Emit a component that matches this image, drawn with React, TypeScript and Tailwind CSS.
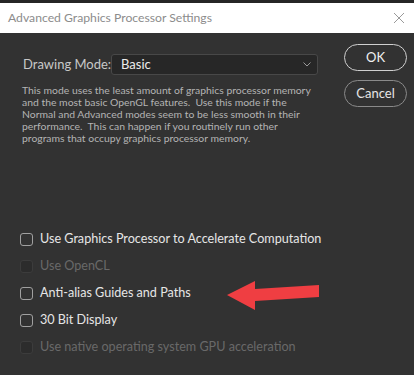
import React from "react";

const font = { fontFamily: 'Lato, "Open Sans", sans-serif' };

type Option = { label: string; disabled?: boolean };

const options: Option[] = [
  { label: "Use Graphics Processor to Accelerate Computation" },
  { label: "Use OpenCL", disabled: true },
  { label: "Anti-alias Guides and Paths" },
  { label: "30 Bit Display" },
  { label: "Use native operating system GPU acceleration", disabled: true },
];

function CheckRow({ label, disabled }: Option) {
  return (
    <div className="flex h-[27px] items-center gap-[7px] whitespace-nowrap">
      <span
        className={`h-[13px] w-[13px] shrink-0 rounded-[3px] border ${
          disabled ? "border-[#3c3c3c] bg-[#2c2c2c]" : "border-[#a0a0a0] bg-[#323232]"
        }`}
      />
      <span className={`text-[12.6px] ${disabled ? "text-[#696969]" : "text-[#e6e6e6]"}`}>
        {label}
      </span>
    </div>
  );
}

export default function App() {
  return (
    <div className="relative flex h-[375px] w-[414px] flex-col overflow-hidden bg-[#323232]" style={font}>
      <div className="h-[3px] bg-[#262626]" />
      <div className="flex h-[30px] items-center justify-between bg-white pl-[8px] pr-[8px]">
        <span className="text-[12.2px] text-[#8c8c8c]">Advanced Graphics Processor Settings</span>
        <svg width="12" height="12" viewBox="0 0 12 12" className="mr-[1px]">
          <path d="M1 1 L11 11 M11 1 L1 11" stroke="#9a9a9a" strokeWidth="1" />
        </svg>
      </div>

      <div className="flex flex-1">
        <div className="w-[320px] shrink-0 pl-[22px] pt-[21px]">
          <div className="flex items-center">
            <span className="w-[89px] whitespace-nowrap pl-[1px] text-[13px] text-[#c8c8c8]">
              Drawing Mode:
            </span>
            <div className="flex h-[21px] w-[207px] items-center justify-between rounded-[3px] border border-[#484848] bg-[#272727] pl-[9px] pr-[6px]">
              <span className="text-[13px] text-[#ececec]">Basic</span>
              <svg width="8" height="5" viewBox="0 0 8 5">
                <path d="M0.5 0.5 L4 4 L7.5 0.5" fill="none" stroke="#9a9a9a" strokeWidth="1" />
              </svg>
            </div>
          </div>
          <p className="mt-[9px] whitespace-nowrap text-[10.4px] leading-[12px] text-[#b4b4b4]">
            This mode uses the least amount of graphics processor memory
            <br />
            and the most basic OpenGL features.&nbsp; Use this mode if the
            <br />
            Normal and Advanced modes seem to be less smooth in their
            <br />
            performance.&nbsp; This can happen if you routinely run other
            <br />
            programs that occupy graphics processor memory.
          </p>
          <div className="mt-[82px] -ml-[2px]">
            {options.map((o) => (
              <CheckRow key={o.label} {...o} />
            ))}
          </div>
        </div>

        <div className="ml-auto mr-[7px] mt-[11px] flex flex-col gap-[9px]">
          <button className="flex h-[27px] w-[63px] items-center justify-center rounded-full border-[1.5px] border-[#d0d0d0] text-[13px] text-[#f0f0f0]">
            OK
          </button>
          <button className="flex h-[27px] w-[63px] items-center justify-center rounded-full border border-[#8a8a8a] text-[13px] text-[#e6e6e6]">
            Cancel
          </button>
        </div>
      </div>

      <svg
        className="absolute left-[224px] top-[278px]"
        width="100"
        height="36"
        viewBox="0 0 100 36"
      >
        <polygon
          points="3,17 31,3 31,11 95,7 95,19 31,23 31,32"
          fill="#ef3e42"
        />
      </svg>
    </div>
  );
}
